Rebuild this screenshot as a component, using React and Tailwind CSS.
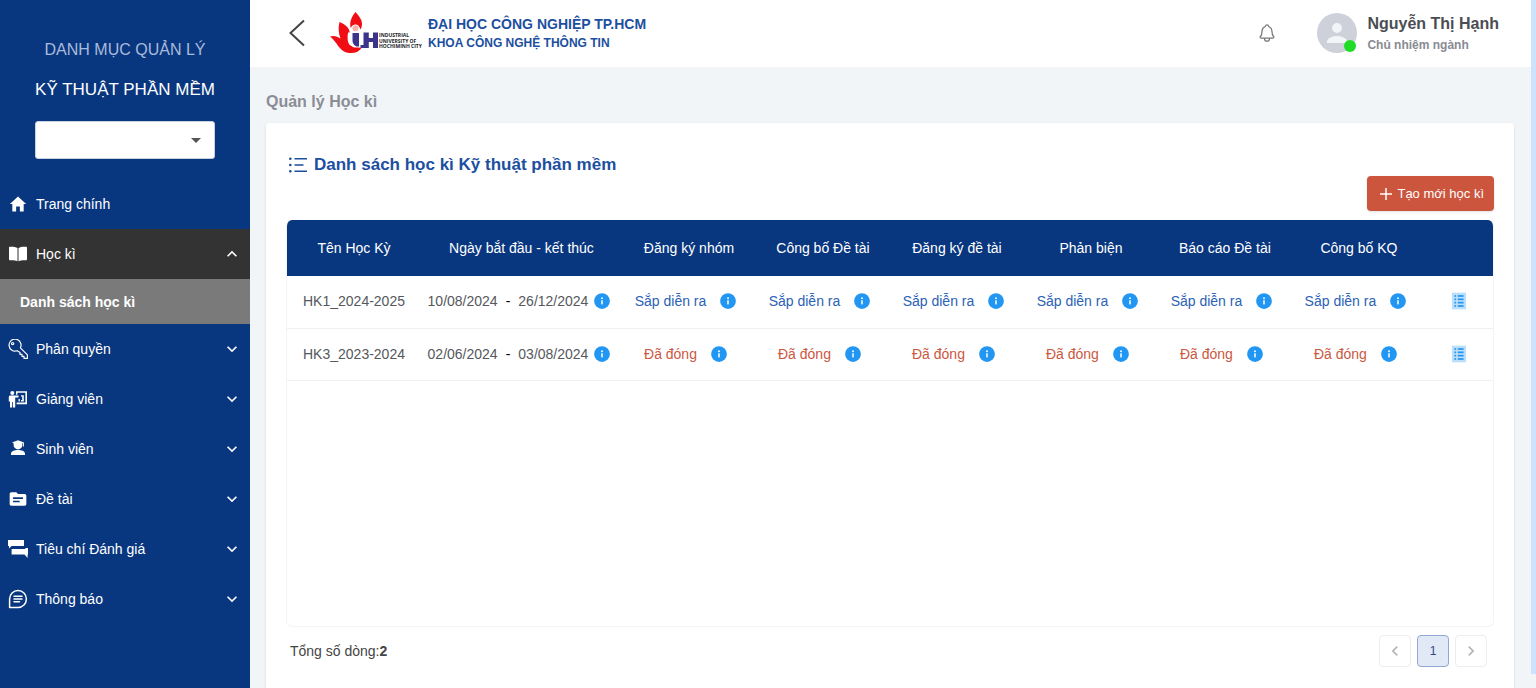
import React from "react";
import { IoMdHome } from "react-icons/io";
import { IoNotificationsOutline } from "react-icons/io5";
import { MdTopic, MdExpandMore, MdExpandLess, MdChevronLeft, MdChevronRight } from "react-icons/md";
import { FcInfo, FcViewDetails } from "react-icons/fc";

function BookIcon({ className }) {
  return (
    <svg viewBox="0 0 20 20" className={className} fill="currentColor" aria-hidden="true">
      <path d="M9.500 4C7.500 2.800 4.500 2.500 1.800 2.800c-.6.100-.8.400-.8.900v11.600c0 .6.400.9.900.9 2.700-.2 5.600 0 7.600 1.100zM10.500 4c2-1.200 5-1.500 7.700-1.200.6.100.8.400.8.900v11.600c0 .6-.4.900-.9.900-2.700-.2-5.600 0-7.600 1.100z" />
    </svg>
  );
}

function KeyIcon({ className }) {
  return (
    <svg viewBox="0 0 20 20" className={className} fill="none" stroke="currentColor" strokeWidth="1.200" strokeLinejoin="round" aria-hidden="true">
      <path d="M12.400 8.800 19.400 15.800v3.600h-3.400v-2h-2v-2h-2v-2L9.200 11.700A6 6 0 1 1 12.400 8.800z" />
      <circle cx="4.600" cy="4.600" r="1.100" />
    </svg>
  );
}

function TeacherIcon({ className }) {
  return (
    <svg viewBox="0 0 20 20" className={className} fill="currentColor" aria-hidden="true">
      <circle cx="4.300" cy="4" r="2" />
      <path d="M2.500 6.600h8v2H7.200V18.400H5V13h-.8v5.400H2V12.500H.8V8.300c0-1 .7-1.700 1.700-1.700z" />
      <path d="M8 2.200h11v13H8.600v-1.600h8.800V3.800H9.400v2H8z" />
      <path d="M10.500 10h1.300v2.500h-1.300zM13 6.200h2.800v6.300H13V11h1.200V7.600H13z" />
    </svg>
  );
}

function StudentIcon({ className }) {
  return (
    <svg viewBox="0 0 20 20" className={className} fill="currentColor" aria-hidden="true">
      <path d="M10 1.200 4 3.600l1.800.8c-.2.500-.2 1-.2 1.600a4.400 4.400 0 0 0 8.800 0c0-.6 0-1-.2-1.500l.9-.4V7.500h.9V3.600z" />
      <path d="M3 16v-1.400C3 12 7 11 10 11s7 1 7 3.600V16z" />
    </svg>
  );
}

function ReviewsIcon({ className }) {
  return (
    <svg viewBox="0 0 20 20" className={className} fill="currentColor" aria-hidden="true">
      <path d="M0 1h16v6H3.600L1 9.500V7H0z" />
      <path d="M3.600 10H17.400V9H20v6.500h-.4V19L16.500 15.500H3.600z" />
    </svg>
  );
}

function ChatIcon({ className }) {
  return (
    <svg viewBox="0 0 20 20" className={className} fill="none" stroke="currentColor" strokeWidth="1.500" aria-hidden="true">
      <path d="M1.600 18.400V10A8.400 8.400 0 1 1 10 18.400z" strokeLinejoin="round" />
      <path d="M6 7.200h8M6 10h8M6 12.800h5.500" strokeLinecap="round" />
    </svg>
  );
}

function ListIcon({ className }) {
  return (
    <svg viewBox="0 0 20 20" className={className} fill="currentColor" aria-hidden="true">
      <circle cx="2.300" cy="3.800" r="1.300" />
      <circle cx="2.300" cy="10" r="1.300" />
      <circle cx="2.300" cy="16.200" r="1.300" />
      <path d="M6.500 3h12.500v1.500H6.500zM6.500 9.300h9v1.500h-9zM6.500 15.500h12.500V17H6.500z" />
    </svg>
  );
}

function Logo() {
  return (
    <svg viewBox="0 0 96 42" className="h-[42px] w-24 shrink-0" role="img" aria-label="Industrial University of Ho Chi Minh City">
      <path fill="#f00d14" d="M25.500 0c4 4.500 7 8.500 6.500 13-.2 1.800-.8 3.200-1.600 4.500-.6-2.700-2.400-4.500-5-4.500-2.200 0-3.900 1.200-4.600 3-1.800-6 1-11.500 4.700-16z" />
      <path fill="#f00d14" d="M9.500 10c6 2.500 9.800 6 10.200 10.500H18c-.8 5-.6 9.500 1.300 12 2 2.300 6 2.700 12.700 2.700C29.500 39.500 25 41.500 19 41 9 40 7.500 30 0 24.500c3.500-1.200 7-.5 10.500 2C8.500 21 8 15.500 9.500 10z" />
      <circle cx="25.500" cy="16.300" r="3.500" fill="#f9b3ae" stroke="#fff" strokeWidth=".8" />
      <path fill="#fff" d="M18.500 21h14.500v14.500H24c-4-1.500-5.500-6-5.500-14.500z" />
      <path fill="#3a348c" d="M22.500 21h6.500v13.500h-2.500c-2.700-1.300-4-3.200-4-6z" />
      <path fill="#3a348c" d="M30.500 33h3v-12.500h5.300v5.500h4.200v-5.500H48V36H43v-6h-4.200v6h-8.300z" />
      <path fill="#fff" d="M30 21h2v12h-2z" />
      <g fill="#1c1c1c" fontFamily="Open Sans, sans-serif" fontWeight="700" fontSize="5">
        <text x="49" y="25">INDUSTRIAL</text>
        <text x="49" y="30.500">UNIVERSITY OF</text>
        <text x="49" y="36">HOCHIMINH CITY</text>
      </g>
    </svg>
  );
}

const sections = [
  { label: "Phân quyền", Icon: KeyIcon },
  { label: "Giảng viên", Icon: TeacherIcon },
  { label: "Sinh viên", Icon: StudentIcon },
  { label: "Đề tài", Icon: MdTopic },
  { label: "Tiêu chí Đánh giá", Icon: ReviewsIcon },
  { label: "Thông báo", Icon: ChatIcon },
];

const phases = ["Đăng ký nhóm", "Công bố Đề tài", "Đăng ký đề tài", "Phản biện", "Báo cáo Đề tài", "Công bố KQ"];

const semesters = [
  { name: "HK1_2024-2025", start: "10/08/2024", end: "26/12/2024", open: true },
  { name: "HK3_2023-2024", start: "02/06/2024", end: "03/08/2024", open: false },
];

function Sidebar() {
  return (
    <aside className="flex w-[250px] shrink-0 flex-col bg-[#09377f] text-sm text-white">
      <div className="flex flex-col items-center px-[35px] pt-[38px] pb-5">
        <p className="text-base leading-6 text-[#a9bbdc]">DANH MỤC QUẢN LÝ</p>
        <p className="mt-4 text-[17px] leading-6 whitespace-nowrap">KỸ THUẬT PHẦN MỀM</p>
        <div className="relative mt-[19px] w-full">
          <select aria-label="Chuyên ngành" className="h-[38px] w-full appearance-none rounded-[3px] border border-[#c9d1dd] bg-white px-3 text-gray-800">
            <option></option>
          </select>
          <svg viewBox="0 0 10 5" className="pointer-events-none absolute top-[17px] right-3.5 h-[5px] w-2.5" aria-hidden="true">
            <path d="M0 0h10L5 5z" fill="#555" />
          </svg>
        </div>
      </div>
      <nav>
        <a href="#home" className="flex h-[50px] items-center gap-2 px-2">
          <IoMdHome className="size-5" />
          Trang chính
        </a>
        <button type="button" aria-expanded="true" className="flex h-[50px] w-full items-center gap-2 bg-[#333] px-2">
          <BookIcon className="size-5" />
          <span className="grow text-left">Học kì</span>
          <MdExpandLess className="size-5" />
        </button>
        <a href="#semesters" className="flex h-[45px] items-center bg-[#7a7a7a] px-5 font-bold">
          Danh sách học kì
        </a>
        {sections.map(({ label, Icon }) => (
          <button key={label} type="button" aria-expanded="false" className="flex h-[50px] w-full items-center gap-2 px-2">
            <Icon className="size-5" />
            <span className="grow text-left">{label}</span>
            <MdExpandMore className="size-5" />
          </button>
        ))}
      </nav>
    </aside>
  );
}

function Header() {
  return (
    <header className="flex h-[67px] shrink-0 items-center bg-white px-8 pb-0.5">
      <button type="button" aria-label="Quay lại" className="text-[#444]">
        <svg viewBox="0 0 28 28" className="size-7" fill="none" stroke="currentColor" strokeWidth="2" aria-hidden="true">
          <path d="M22 1.500 8.500 14 22 26.500" />
        </svg>
      </button>
      <div className="ml-5 flex items-center gap-0.5">
        <Logo />
        <div className="font-bold whitespace-nowrap text-[#1c4fa0]">
          <p className="text-sm leading-5">ĐẠI HỌC CÔNG NGHIỆP TP.HCM</p>
          <p className="text-xs leading-[18px]">KHOA CÔNG NGHỆ THÔNG TIN</p>
        </div>
      </div>
      <button type="button" aria-label="Thông báo" className="ml-auto text-[#777]">
        <IoNotificationsOutline className="size-5" />
      </button>
      <div className="ml-10 flex items-center gap-2.5">
        <div className="relative size-10">
          <svg viewBox="0 0 40 40" className="size-10" aria-hidden="true">
            <circle cx="20" cy="20" r="20" fill="#ced1d9" />
            <circle cx="20" cy="15" r="5" fill="#f3f4f8" />
            <path d="M10 30v-1.500c0-3.500 6-5.500 10-5.500s10 2 10 5.500V30z" fill="#f3f4f8" />
          </svg>
          <span className="absolute right-px bottom-px size-3 rounded-full bg-[#1fdd27]"></span>
        </div>
        <div className="pt-[3px] font-bold whitespace-nowrap">
          <p className="text-base leading-[22px] text-[#4b4d52]">Nguyễn Thị Hạnh</p>
          <p className="text-xs leading-5 text-[#888b92]">Chủ nhiệm ngành</p>
        </div>
      </div>
    </header>
  );
}

function InfoButton({ label }) {
  return (
    <button type="button" aria-label={label}>
      <FcInfo className="size-[18px]" />
    </button>
  );
}

function SemesterTable() {
  return (
    <div className="h-[407px] overflow-hidden rounded-md border-x border-b border-[#f3f4f6]">
      <table className="w-full table-fixed border-collapse text-sm whitespace-nowrap text-[#55585c]">
        <colgroup>
          <col className="w-1/9" />
          <col className="w-1/6" />
          {phases.map((phase) => (
            <col key={phase} className="w-1/9" />
          ))}
          <col className="w-1/18" />
        </colgroup>
        <thead className="bg-[#09377f] text-white">
          <tr className="h-14">
            <th scope="col" className="font-normal">Tên Học Kỳ</th>
            <th scope="col" className="font-normal">Ngày bắt đầu - kết thúc</th>
            {phases.map((phase) => (
              <th key={phase} scope="col" className="font-normal">{phase}</th>
            ))}
            <th scope="col" aria-label="Chi tiết"></th>
          </tr>
        </thead>
        <tbody>
          {semesters.map((row) => (
            <tr key={row.name} className="h-[52px] border-b border-[#eff0f1]">
              <td className="pb-px text-center">{row.name}</td>
              <td className="pr-1 pb-px">
                <div className="flex items-center justify-center">
                  {row.start}
                  <span className="mx-2 text-black">-</span>
                  {row.end}
                  <span className="ml-[5px] flex">
                    <InfoButton label="Thời gian học kì" />
                  </span>
                </div>
              </td>
              {phases.map((phase) => (
                <td key={phase} className="pr-1.5 pb-px">
                  <div className="flex items-center justify-center gap-[13px]">
                    <span className={row.open ? "text-[#2b62b5]" : "text-[#cb583f]"}>{row.open ? "Sắp diễn ra" : "Đã đóng"}</span>
                    <span className="flex">
                      <InfoButton label={phase} />
                    </span>
                  </div>
                </td>
              ))}
              <td className="pb-px">
                <button type="button" aria-label="Xem chi tiết" className="mx-auto block">
                  <FcViewDetails className="size-5" />
                </button>
              </td>
            </tr>
          ))}
        </tbody>
      </table>
    </div>
  );
}

export default function App() {
  return (
    <div className="flex h-screen overflow-hidden bg-[#f1f5f8] font-['Liberation_Sans',Arial,sans-serif]">
      <Sidebar />
      <div className="flex min-w-0 grow flex-col">
        <Header />
        <main className="flex grow flex-col pr-[17px] pl-4">
          <h1 className="pt-[23px] text-base font-bold text-[#8b8d96]">Quản lý Học kì</h1>
          <section className="mt-[9px] grow rounded-t bg-white px-5 pt-[30px] shadow-sm">
            <h2 className="flex items-center gap-1.5 pl-0.5 text-[17px] leading-6 font-bold text-[#1c4fa0]">
              <ListIcon className="size-5" />
              Danh sách học kì Kỹ thuật phần mềm
            </h2>
            <div className="-mt-px mb-[9px] flex justify-end">
              <button type="button" className="flex h-[35px] items-center gap-1 rounded bg-[#cb563d] pr-2.5 pl-3 text-[13px] text-white shadow">
                <svg viewBox="0 0 14 14" className="size-3.5" fill="none" stroke="currentColor" strokeWidth="1.500" aria-hidden="true">
                  <path d="M7 1v12M1 7h12" />
                </svg>
                Tạo mới học kì
              </button>
            </div>
            <SemesterTable />
            <div className="flex items-center justify-between pt-2 pr-[7px] pl-1 text-sm text-[#444]">
              <p>
                Tổng số dòng:<b>2</b>
              </p>
              <div className="flex gap-1.5 text-xs">
                <button type="button" aria-label="Trang trước" className="flex size-8 items-center justify-center rounded border border-[#ebedf0] text-[#b5b5b5]">
                  <MdChevronLeft className="size-5" />
                </button>
                <button type="button" aria-current="page" className="flex size-8 items-center justify-center rounded border border-[#91a8d4] bg-[#e1e8f6] text-[#2f4b84]">1</button>
                <button type="button" aria-label="Trang sau" className="flex size-8 items-center justify-center rounded border border-[#ebedf0] text-[#b5b5b5]">
                  <MdChevronRight className="size-5" />
                </button>
              </div>
            </div>
          </section>
        </main>
      </div>
      <div className="w-[5px] shrink-0" aria-hidden="true">
        <div className="h-[98%] bg-[#cce2fd]"></div>
      </div>
    </div>
  );
}
